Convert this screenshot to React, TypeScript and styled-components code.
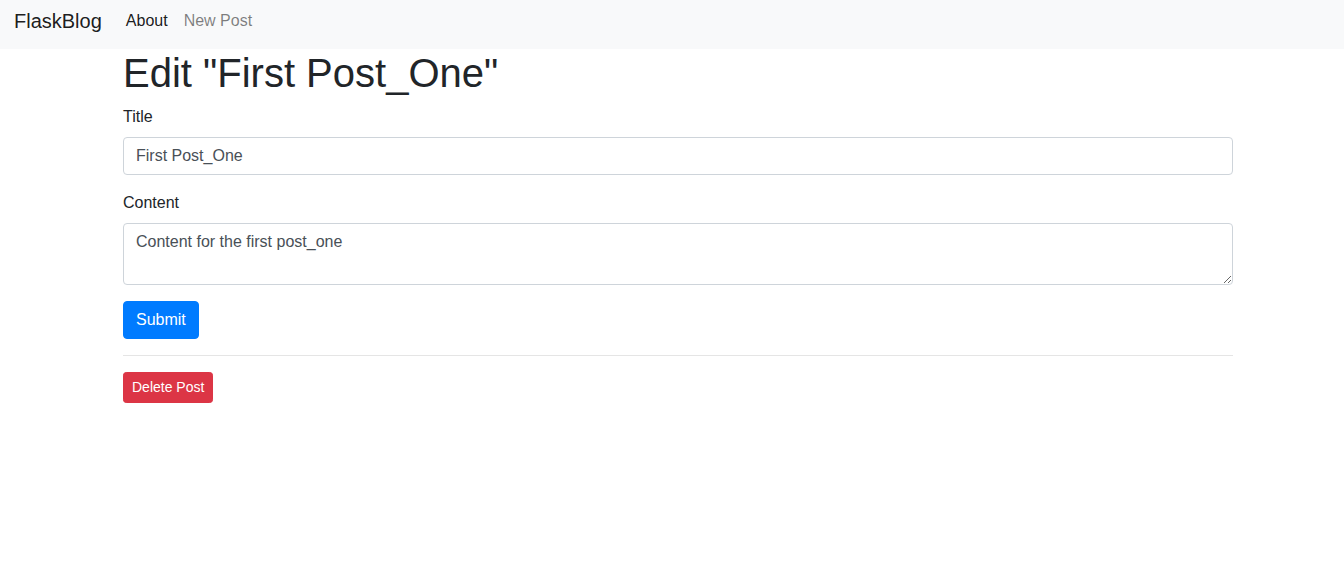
import React from "react";
import styled, { createGlobalStyle } from "styled-components";

const Global = createGlobalStyle`
  html, body { margin: 0; padding: 0; background: #fff; }
  body {
    font-family: "Liberation Sans", Arial, sans-serif;
    font-size: 16px;
    line-height: 1.5;
    color: #212529;
  }
  * { box-sizing: border-box; }
`;

const Navbar = styled.nav`
  display: flex;
  align-items: flex-start;
  height: 49px;
  padding: 0 14px;
  background: #f8f9fa;
`;

const Brand = styled.a`
  font-size: 20px;
  line-height: 30px;
  padding-top: 6px;
  margin-right: 16px;
  color: rgba(0, 0, 0, 0.9);
  text-decoration: none;
  white-space: nowrap;
`;

const NavList = styled.div`
  display: flex;
`;

const NavLink = styled.a<{ $active?: boolean }>`
  padding: 9px 8px 0;
  line-height: 24px;
  font-size: 16px;
  color: ${(p) => (p.$active ? "rgba(0,0,0,0.9)" : "rgba(0,0,0,0.5)")};
  text-decoration: none;
`;

const Container = styled.main`
  width: 1110px;
  margin-left: calc(50% - 549px);
`;

const Heading = styled.h1`
  margin: 0 0 8px;
  font-size: 40px;
  line-height: 48px;
  font-weight: 500;
  color: #212529;
`;

const FormGroup = styled.div`
  margin-bottom: 16px;
`;

const Label = styled.label`
  display: block;
  margin-bottom: 8px;
  line-height: 24px;
`;

const Input = styled.input`
  display: block;
  width: 100%;
  height: 38px;
  padding: 6px 12px;
  font-family: inherit;
  font-size: 16px;
  line-height: 24px;
  color: #495057;
  background: #fff;
  border: 1px solid #ced4da;
  border-radius: 4px;
  outline: none;
`;

const TextArea = styled.textarea`
  display: block;
  width: 100%;
  height: 62px;
  padding: 6px 12px;
  font-family: inherit;
  font-size: 16px;
  line-height: 24px;
  color: #495057;
  background: #fff;
  border: 1px solid #ced4da;
  border-radius: 4px;
  outline: none;
  resize: vertical;
`;

const Button = styled.button<{ $variant: "primary" | "danger"; $small?: boolean }>`
  display: inline-block;
  font-family: inherit;
  font-size: ${(p) => (p.$small ? "14px" : "16px")};
  line-height: ${(p) => (p.$small ? "21px" : "24px")};
  padding: ${(p) => (p.$small ? "4px 8px" : "6px 12px")};
  border-radius: ${(p) => (p.$small ? "3.2px" : "4px")};
  color: #fff;
  background: ${(p) => (p.$variant === "primary" ? "#007bff" : "#dc3545")};
  border: 1px solid ${(p) => (p.$variant === "primary" ? "#007bff" : "#dc3545")};
  cursor: pointer;
`;

const Rule = styled.hr`
  margin: 16px 0;
  border: 0;
  border-top: 1px solid rgba(0, 0, 0, 0.1);
`;

export default function App() {
  return (
    <>
      <Global />
      <Navbar>
        <Brand href="#">FlaskBlog</Brand>
        <NavList>
          <NavLink href="#" $active>
            About
          </NavLink>
          <NavLink href="#">New Post</NavLink>
        </NavList>
      </Navbar>
      <Container>
        <Heading>Edit "First Post_One"</Heading>
        <form onSubmit={(e) => e.preventDefault()}>
          <FormGroup>
            <Label htmlFor="title">Title</Label>
            <Input id="title" name="title" defaultValue="First Post_One" />
          </FormGroup>
          <FormGroup>
            <Label htmlFor="content">Content</Label>
            <TextArea id="content" name="content" defaultValue="Content for the first post_one" />
          </FormGroup>
          <FormGroup>
            <Button type="submit" $variant="primary">
              Submit
            </Button>
          </FormGroup>
        </form>
        <Rule />
        <Button type="button" $variant="danger" $small>
          Delete Post
        </Button>
      </Container>
    </>
  );
}
